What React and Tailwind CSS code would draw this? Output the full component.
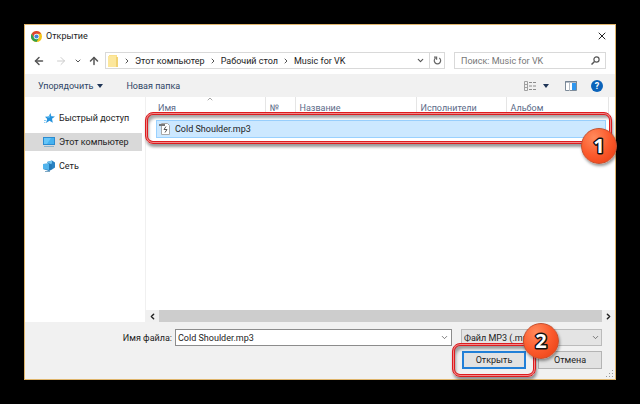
import { ArrowLeft, ArrowRight, ArrowUp, ChevronDown, ChevronLeft, ChevronRight, ChevronUp, X } from 'lucide-react';

const crumbs = ['Этот компьютер', 'Рабочий стол', 'Music for VK'];

const columns = [
  { name: 'Имя', width: 'w-[111px]' },
  { name: '№', width: 'w-[30px]' },
  { name: 'Название', width: 'w-[121px]' },
  { name: 'Исполнители', width: 'w-[90px]' },
  { name: 'Альбом', width: 'w-[102px]' },
];

const places = [
  { name: 'Быстрый доступ', Icon: StarIcon },
  { name: 'Этот компьютер', Icon: ComputerIcon, active: true },
  { name: 'Сеть', Icon: NetworkIcon },
];

function ChromeIcon() {
  return (
    <svg className="h-[11px] w-[11px]" viewBox="0 0 24 24">
      <circle cx="12" cy="12" r="12" fill="#f5c518" />
      <path d="M12 6H22.4A12 12 0 0 0 1.6 6L6.8 15Z" fill="#dd4433" />
      <path d="M1.6 6A12 12 0 0 0 12 24L17.2 15L6.8 15Z" fill="#2fa04e" />
      <circle cx="12" cy="12" r="6" fill="#fff" />
      <circle cx="12" cy="12" r="4.6" fill="#4285d8" />
    </svg>
  );
}

function FolderIcon() {
  return (
    <svg className="h-3 w-[11px]" viewBox="0 0 11 12">
      <path d="M1 0h8v2h1v10H1z" fill="#fbe08a" />
      <path d="M0 1h8v11H0z" fill="#fce79d" />
      <path d="M8 2h2v10H8z" fill="#f0d274" />
    </svg>
  );
}

function StarIcon() {
  return (
    <svg className="h-3 w-3" viewBox="0 0 12 12">
      <path d="M7.500 1l.8 3.200 3.700.3-3 2.200.8 4-3.300-2L3 11l1.200-4L2 4.800l3.600-.4z" fill="#2492dc" />
      <path d="M7.300 2.500L7 5.500 4 6z" fill="#5ebcf3" />
      <path d="M1 8.500h2M1 10.500h1.500" stroke="#8ccbf2" />
    </svg>
  );
}

function ComputerIcon() {
  return (
    <svg className="h-3 w-3" viewBox="0 0 12 12">
      <path d="M0 1h12v8H0z" fill="#2b8bd0" />
      <path d="M1 2h10v6H1z" fill="#45b2f0" />
      <path d="M1 2h7L4 8H1z" fill="#66c6f8" />
      <path d="M1 10.500h10" stroke="#8fb3c9" />
    </svg>
  );
}

function NetworkIcon() {
  return (
    <svg className="h-3 w-3" viewBox="0 0 12 12">
      <path d="M4 2l5-1.500 3 2v5l-3 2z" fill="#2a83c2" />
      <path d="M4 2l5-1.500v3L7 4z" fill="#6fc3ef" />
      <path d="M0 4l6-.5 3 1.500v4.500L6 11 0 9z" fill="#2379b8" />
      <path d="M0 4l6-.5v6.500L0 9z" fill="#52b4ec" />
      <path d="M2 11.500h5" stroke="#7fa9c4" />
    </svg>
  );
}

function Mp3Icon() {
  return (
    <svg className="h-3 w-3" viewBox="0 0 12 12">
      <path d="M2.500.5h6l2 2v9h-8z" fill="#fff" stroke="#a8a8a8" />
      <path d="M0 1h6v2H0z" fill="#777" />
      <path d="M7 3.500L5 6.500h3L6 9.500" fill="none" stroke="#555" />
    </svg>
  );
}

function ViewIcon() {
  return (
    <svg className="h-[10px] w-3" viewBox="0 0 12 10">
      <path d="M.5.5h3v9h-3zM.5 3.500h3M.5 6.500h3" fill="none" stroke="#a0a0a0" />
      <path d="M5 1.500h3M9 1.500h3M5 5h3M9 5h3M5 8.500h3M9 8.500h3" stroke="#8b8b8b" />
    </svg>
  );
}

function PaneIcon() {
  return (
    <svg className="h-[10px] w-3" viewBox="0 0 12 10">
      <path d="M.5.5h11v9H.5z" fill="#fff" stroke="#7d8b99" />
      <path d="M0 1h12" stroke="#6c7b8c" />
      <path d="M4.500 1v9" stroke="#b5bcc4" />
      <path d="M7 2h4v7H7z" fill="#2f96ee" />
    </svg>
  );
}

function RefreshIcon() {
  return (
    <svg className="h-[9px] w-[9px]" viewBox="0 0 9 9" fill="none" stroke="#666" strokeWidth="1.200">
      <path d="M6.300 2A3.200 3.200 0 1 1 2.600 2" />
      <path d="M1 1.200h2.600v2.600" />
    </svg>
  );
}

function SearchIcon() {
  return (
    <svg className="h-[9px] w-[9px]" viewBox="0 0 9 9" fill="none" stroke="#555" strokeWidth="1.200">
      <circle cx="5.500" cy="3.500" r="2.600" />
      <path d="M3.500 5.500L.5 8.500" strokeWidth="1.500" />
    </svg>
  );
}

function Badge({ children, className }) {
  return (
    <div className={`absolute z-20 h-9 w-9 rounded-full bg-radial-[at_35%_25%] from-[#ff8a5c] via-[#fb5a2c] to-[#e63c12] border border-[#c4502f] shadow-[1px_2px_3px_rgba(0,0,0,0.4)] ${className}`}>
      <svg className="h-full w-full" viewBox="0 0 34 34">
        <text x="17" y="24" textAnchor="middle" fontFamily="Noto Sans, sans-serif" fontSize="20" fontWeight="700" fill="#fff" stroke="#111" strokeWidth="3" strokeLinejoin="round" paintOrder="stroke">{children}</text>
      </svg>
    </div>
  );
}

// double red line with a light core, drop shadow on both sides
function Callout({ className }) {
  return (
    <div className={`pointer-events-none absolute z-10 rounded-lg border border-[#dc1c1f] shadow-[1px_3px_3px_rgba(0,0,0,0.4),inset_0_0_0_1px_#f08a8a,inset_0_0_0_2px_#dc1c1f,inset_3px_5px_3px_rgba(0,0,0,0.35)] ${className}`} />
  );
}

export default function App() {
  return (
    <div className="min-h-screen bg-black p-6 font-['Roboto','Open_Sans',sans-serif] text-[9px] leading-4 text-[#222]">
      <div className="border border-[#dfb56c] bg-white">
        <header className="flex h-[22px] items-center gap-1 pr-[7px] pl-[6px]">
          <ChromeIcon />
          <h1 className="flex-1">Открытие</h1>
          <button aria-label="Закрыть"><X className="h-3 w-3 text-[#222]" strokeWidth={2} /></button>
        </header>

        <nav className="flex h-[27px] items-center pr-[9px] pl-2 text-[#555]">
          <button aria-label="Назад" className="w-[22px]"><ArrowLeft className="h-3 w-3" strokeWidth={3} /></button>
          <button aria-label="Вперёд" className="w-[19px]" disabled><ArrowRight className="h-3 w-3 text-[#ccc]" /></button>
          <button aria-label="Недавние" className="w-[14px]"><ChevronDown className="h-2 w-2" strokeWidth={3} /></button>
          <button aria-label="Вверх" className="w-[17px]"><ArrowUp className="h-3 w-3" strokeWidth={3} /></button>
          <div className="flex h-[17px] flex-1 items-center border border-[#d9d9d9] pl-[2px]">
            <FolderIcon />
            <ol className="flex flex-1 items-center text-[#222]">
              {crumbs.map(c => (
                <li key={c} className="flex items-center">
                  <ChevronRight className="mx-1 h-2 w-2 text-[#555]" strokeWidth={3} />
                  <button>{c}</button>
                </li>
              ))}
            </ol>
            <button aria-label="История" className="mr-1"><ChevronDown className="h-[9px] w-[9px]" strokeWidth={3} /></button>
            <button aria-label="Обновить" className="flex h-full w-[15px] items-center justify-center border-l border-[#d9d9d9]"><RefreshIcon /></button>
          </div>
          <label className="ml-[9px] flex h-[17px] w-[152px] items-center border border-[#d9d9d9] pr-[5px] pl-[6px]">
            <input aria-label="Поиск" placeholder="Поиск: Music for VK" className="min-w-0 flex-1 outline-none placeholder:text-[#777]" />
            <SearchIcon />
          </label>
        </nav>

        <div className="flex h-[23px] items-center bg-[#f1f1f1] pr-3 pl-[13px] text-[#2f4565]">
          <button className="flex items-center gap-1">
            Упорядочить
            <svg className="h-1 w-[6px]" viewBox="0 0 6 4"><path d="M0 0h6L3 4z" fill="#1f3557" /></svg>
          </button>
          <button className="ml-[23px]">Новая папка</button>
          <button aria-label="Вид" className="ml-auto flex items-center gap-[7px]">
            <ViewIcon />
            <svg className="h-1 w-[6px]" viewBox="0 0 6 4"><path d="M0 0h6L3 4z" fill="#1f3557" /></svg>
          </button>
          <button aria-label="Область просмотра" className="ml-4"><PaneIcon /></button>
          <button aria-label="Справка" className="ml-[14px] flex h-3 w-3 items-center justify-center rounded-full bg-[#0b63ba] text-[9px] font-bold text-white">?</button>
        </div>

        <main className="flex h-[225px]">
          <ul className="w-[121px] border-r border-[#f0f0f0] pt-3 pr-[3px]">
            {places.map(({ name, Icon, active }) => (
              <li key={name} className="mb-[6px]">
                <a href="#" className={`flex h-[18px] items-center gap-1 pl-[18px] whitespace-nowrap ${active ? 'bg-[#d9d9d9]' : ''}`}>
                  <Icon />
                  {name}
                </a>
              </li>
            ))}
          </ul>

          <div className="relative flex min-w-0 flex-1 flex-col">
            <ChevronUp className="absolute top-[-2px] left-[60px] h-2 w-2 text-[#777]" />
            <table className="ml-2 table-fixed border-collapse text-[#5b6b88]">
              <thead>
                <tr className="h-[17px]">
                  {columns.map(col => (
                    <th key={col.name} className={`border-r border-[#e5e5e5] p-0 pt-1 pl-1 text-left leading-3 font-normal ${col.width}`}>{col.name}</th>
                  ))}
                  <th />
                </tr>
              </thead>
            </table>
            <button className="mt-[6px] mr-[9px] ml-[10px] flex h-[18px] items-center gap-1 border border-[#99d1ff] bg-[#cce8ff] pl-[2px] text-[#222]">
              <Mp3Icon />
              Cold Shoulder.mp3
            </button>
            <Callout className="top-[15px] right-[3px] -left-px h-8" />
            <Badge className="top-[31px] right-[-2px]">1</Badge>
            <div className="mt-auto flex h-3 items-center bg-[#f0f0f0]">
              <ChevronLeft className="mx-[2px] h-[9px] w-[9px]" strokeWidth={4} />
              <div className="h-3 flex-1 bg-[#cdcdcd]" />
              <ChevronRight className="mx-[2px] h-[9px] w-[9px]" strokeWidth={4} />
            </div>
          </div>
        </main>

        <footer className="relative flex h-[57px] flex-col gap-[5px] bg-[#f1f1f1] pt-[7px] pr-[13px]">
          <div className="flex h-[17px] items-center">
            <label htmlFor="filename" className="w-[147px] text-right">Имя файла:</label>
            <div className="ml-[3px] flex h-full flex-1 items-center border border-[#8c8c8c] bg-white pr-[2px]">
              <input id="filename" defaultValue="Cold Shoulder.mp3" className="min-w-0 flex-1 pl-[2px] outline-none" />
              <ChevronDown className="h-[9px] w-[9px] text-[#555]" />
            </div>
            <div className="relative ml-[9px] flex h-full w-[141px] items-center">
              <select aria-label="Тип файла" className="h-full w-full appearance-none border border-[#bbb] bg-[#e4e4e4] pl-[2px]">
                <option>Файл MP3 (.mp3)</option>
              </select>
              <ChevronDown className="pointer-events-none absolute right-[2px] h-[9px] w-[9px] text-[#555]" />
            </div>
          </div>
          <div className="flex justify-end gap-3">
            <button className="h-[18px] w-16 border-2 border-[#2280d8] bg-[#e2e2e2] leading-3">Открыть</button>
            <button className="h-[18px] w-16 border border-[#b4b4b4] bg-[#e2e2e2] leading-3">Отмена</button>
          </div>
          <Callout className="top-[21px] right-[79px] h-[34px] w-[84px]" />
          <Badge className="top-[1px] right-[56px]">2</Badge>
          <svg className="absolute right-[2px] bottom-[2px] h-[7px] w-[7px]" viewBox="0 0 7 7">
            <path d="M6 0h1v1H6zM3 3h1v1H3zM6 3h1v1H6zM0 6h1v1H0zM3 6h1v1H3zM6 6h1v1H6z" fill="#999" />
          </svg>
        </footer>
      </div>
    </div>
  );
}
